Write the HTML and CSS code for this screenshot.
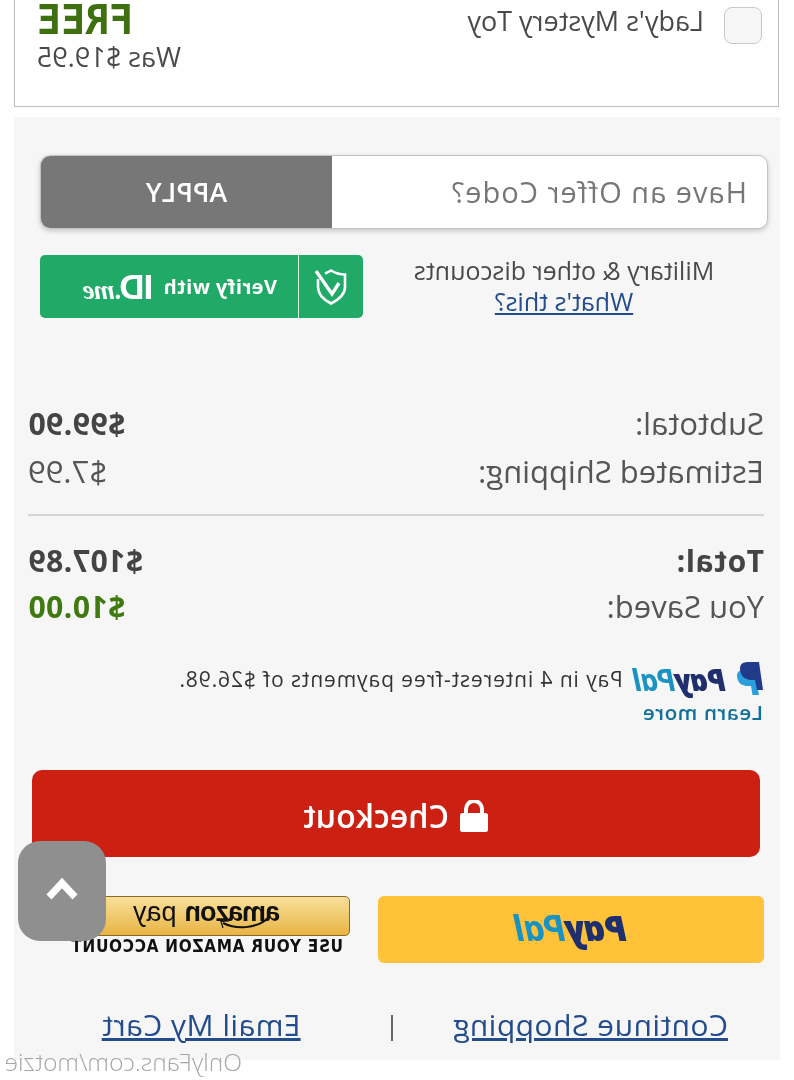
FILE: index.html
```html
<!DOCTYPE html>
<html lang="en">
<head>
    <meta charset="UTF-8">
    <meta name="viewport" content="width=device-width, initial-scale=1.0">
    <title>Cart</title>
    <link rel="stylesheet" href="styles.css">
</head>
<body>
    <div class="page">
        <div class="gift-card">
            <div class="gift-check"></div>
            <div class="gift-name">Lady's Mystery Toy</div>
            <div class="gift-price">
                <div class="gift-free">FREE</div>
                <div class="gift-was">Was $19.95</div>
            </div>
        </div>

        <div class="summary">
            <div class="offer">
                <div class="offer-input">Have an Offer Code?</div>
                <div class="offer-apply">APPLY</div>
            </div>

            <div class="military">
                <div class="military-text">
                    <div>Military &amp; other discounts</div>
                    <a class="whats-this">What's this?</a>
                </div>
                <div class="idme">
                    <div class="idme-icon">
                        <svg width="34" height="38" viewBox="0 0 34 38">
                            <path d="M30 11 L30 19 C30 27 24 32 17 35.500 C10 32 3 27 3 19 L3 6.500 C8 6.500 13 5 17 2.500 C19 3.800 21 4.700 23 5.400" fill="none" stroke="#fff" stroke-width="2.600"/>
                            <path d="M9 15 L16 26 L32 3" fill="none" stroke="#fff" stroke-width="3.400"/>
                        </svg>
                    </div>
                    <div class="idme-label">
                        <span>Verify with</span>
                        <span class="idme-logo"><b>ID</b><i>.me</i></span>
                    </div>
                </div>
            </div>

            <div class="totals">
                <div class="row"><span>Subtotal:</span><b>$99.90</b></div>
                <div class="row"><span>Estimated Shipping:</span><span>$7.99</span></div>
                <div class="divider"></div>
                <div class="row"><b>Total:</b><b>$107.89</b></div>
                <div class="row row-saved"><span>You Saved:</span><b class="saved">$10.00</b></div>
            </div>

            <div class="paylater">
                <div class="paylater-line">
                    <svg width="26" height="34" viewBox="0 0 26 34">
                        <path d="M9 8 H20 C25 8 27 12 25.500 17 C24 22 20 24 15 24 H12 L10.500 33 H4 Z" fill="#2a9fdc"/>
                        <path d="M4 0 H15 C22 0 24 4 22.500 10 C21 16 16 18 11 18 H8 L6 28 H0 Z" fill="#1f3b8a"/>
                    </svg>
                    <span class="pp-logo small"><span class="pp-pay">Pay</span><span class="pp-pal">Pal</span></span>
                    <span class="paylater-text">Pay in 4 interest-free payments of $26.98.</span>
                </div>
                <a class="learn-more">Learn more</a>
            </div>

            <div class="checkout">
                <svg width="30" height="32" viewBox="0 0 30 32">
                    <path d="M7 14 V9 A8 8 0 0 1 23 9 V14" fill="none" stroke="#fff" stroke-width="4"/>
                    <rect x="1" y="13" width="28" height="19" rx="2.500" fill="#fff"/>
                </svg>
                <span>Checkout</span>
            </div>

            <div class="express">
                <div class="paypal-btn">
                    <span class="pp-logo"><span class="pp-pay">Pay</span><span class="pp-pal">Pal</span></span>
                </div>
                <div class="amazon">
                    <div class="amazon-btn">
                        <span class="amazon-word">amazon
                            <svg class="amazon-smile" width="48" height="12" viewBox="0 0 48 12">
                                <path d="M1 1 C12 9 30 11 44 4" fill="none" stroke="#111" stroke-width="2"/>
                                <path d="M38 2 L46 2.500 L44 9" fill="none" stroke="#111" stroke-width="1.200"/>
                            </svg>
                        </span>
                        <span class="amazon-pay">pay</span>
                    </div>
                    <div class="amazon-note">USE YOUR AMAZON ACCOUNT</div>
                </div>
            </div>

            <div class="cart-links">
                <a>Continue Shopping</a>
                <span class="cart-sep"></span>
                <a>Email My Cart</a>
            </div>
        </div>

        <div class="to-top">
            <svg width="34" height="24" viewBox="0 0 34 24">
                <path d="M4 20 L17 6 L30 20" fill="none" stroke="#fff" stroke-width="7"/>
            </svg>
        </div>
        <div class="watermark">OnlyFans.com/motzie</div>
    </div>
</body>
</html>
```

FILE: styles.css
```css
/* the whole screenshot is mirrored left to right, and a bit soft */
body {
    margin: 0;
    background: #fff;
    font-family: "Open Sans", "Liberation Sans", sans-serif;
    color: #4a4a4a;
}
a {
    color: #234c8e;
    text-decoration: underline;
}
.page {
    position: relative;
    width: 794px;
    height: 1080px;
    overflow: hidden;
    transform: scaleX(-1);
    filter: blur(0.4px);
}
.gift-card {
    display: flex;
    height: 108px;
    margin: -1px 14px 0 15px;
    padding: 0 22px 0 16px;
    background: #fff;
    border: 1px solid #bdbdbd;
    box-sizing: border-box;
}
.gift-check {
    width: 38px;
    height: 37px;
    margin-top: 7px;
    background: #f6f6f6;
    border: 1px solid #c9c9c9;
    border-radius: 8px;
    box-sizing: border-box;
}
.gift-name {
    margin: 2px 0 0 20px;
    font-size: 27px;
    line-height: 38px;
    flex: 1;
}
.gift-price {
    width: 144px;
}
.gift-free {
    margin-top: 2px;
    font: bold 40px/36px "DejaVu Sans Mono", monospace;
    color: #3f7010;
    text-align: right;
}
.gift-was {
    font-size: 27px;
    line-height: 32px;
    margin-top: 3px;
    white-space: nowrap;
}
.summary {
    margin: 10px 14px 0;
    height: 943px;
    background: #f6f6f6;
    padding: 38px 26px 0 12px;
    box-sizing: border-box;
}
.offer {
    display: flex;
    height: 74px;
    background: #fff;
    border-radius: 10px;
    border: 1px solid #c4c4c4;
    box-shadow: 0 2px 5px rgba(0,0,0,0.2);
    overflow: hidden;
    box-sizing: border-box;
}
.offer-input {
    flex: 1;
    padding-left: 20px;
    line-height: 72px;
    font-size: 29px;
    letter-spacing: 1px;
    color: #777;
}
.offer-apply {
    width: 291px;
    background: #777;
    color: #fff;
    text-align: center;
    font-size: 27px;
    font-weight: 600;
    line-height: 72px;
}
.military {
    display: flex;
    justify-content: space-between;
    margin-top: 26px;
}
.military-text {
    width: 302px;
    margin-left: 53px;
    text-align: center;
    font-size: 25px;
    line-height: 31px;
    white-space: nowrap;
}
.idme {
    display: flex;
    width: 323px;
    height: 63px;
    background: #20a967;
    border-radius: 5px;
    color: #fff;
}
.idme-icon {
    display: flex;
    align-items: center;
    justify-content: center;
    width: 64px;
    border-right: 1px solid #d6f0e2;
}
.idme-label {
    display: flex;
    align-items: center;
    gap: 10px;
    padding-left: 21px;
    font-size: 20px;
    font-weight: 700;
    letter-spacing: 0.4px;
}
.idme-logo b {
    font: bold 35px "Liberation Sans", sans-serif;
    letter-spacing: -1px;
}
.idme-logo i {
    font: italic bold 27px "Liberation Serif", serif;
    letter-spacing: -1px;
}
.totals {
    margin: 81px 0 0 4px;
    width: 736px;
    font-size: 31px;
    color: #555;
}
.row {
    display: flex;
    justify-content: space-between;
    align-items: center;
    height: 48px;
}
.row b {
    font-size: 30px;
    font-weight: 700;
    letter-spacing: 0.5px;
    color: #444;
}
.row-saved {
    margin-top: -2px;
}
.row .saved {
    color: #3f7a10;
}
.divider {
    height: 2px;
    margin: 19px 0 20px;
    background: #d6d6d6;
}
.paylater {
    margin: 31px 0 0 5px;
}
.paylater-line {
    display: flex;
    align-items: center;
    gap: 11px;
    height: 36px;
}
.paylater-text {
    font-size: 21px;
    letter-spacing: 0.9px;
    color: #333;
}
.pp-logo {
    font: italic 800 36px "Open Sans", sans-serif;
    letter-spacing: -1px;
}
.pp-logo.small {
    font-size: 30px;
}
.pp-pay {
    color: #1f2f6e;
}
.pp-pal {
    color: #1b93c2;
    font-weight: 700;
}
.learn-more {
    display: block;
    margin-top: 1px;
    font-size: 20.500px;
    font-weight: 600;
    letter-spacing: 0.6px;
    color: #0f7099;
    text-decoration: none;
}
.checkout {
    display: flex;
    align-items: center;
    justify-content: center;
    gap: 10px;
    margin: 44px -8px 0 8px;
    height: 87px;
    padding-top: 4px;
    background: #cb2012;
    border-radius: 10px;
    box-sizing: border-box;
    color: #fff;
    font-size: 32px;
    font-weight: 600;
}
.express {
    display: flex;
    justify-content: space-between;
    margin: 39px 0 0 4px;
    width: 736px;
}
.paypal-btn {
    display: flex;
    align-items: center;
    justify-content: center;
    width: 386px;
    height: 67px;
    padding-bottom: 4px;
    background: #ffc238;
    border-radius: 6px;
    box-sizing: border-box;
}
.amazon {
    width: 278px;
    margin-right: 44px;
}
.amazon-btn {
    display: flex;
    align-items: center;
    gap: 9px;
    height: 40px;
    padding: 0 0 8px 69px;
    background: linear-gradient(#f8e09a, #e8b445);
    border: 1px solid #8a6a22;
    border-radius: 5px;
    box-sizing: border-box;
    color: #111;
}
.amazon-word {
    position: relative;
    font: bold 27px "Liberation Sans", sans-serif;
    letter-spacing: -1px;
    line-height: 26px;
}
.amazon-smile {
    position: absolute;
    left: 13px;
    top: 20px;
}
.amazon-pay {
    font: 27px "Liberation Sans", sans-serif;
}
.amazon-note {
    padding-left: 7px;
    font: bold 17px/20px "DejaVu Sans Condensed", "DejaVu Sans", sans-serif;
    letter-spacing: 0.7px;
    color: #111;
    white-space: nowrap;
}
.cart-links {
    display: flex;
    align-items: center;
    margin: 41px 0 0 40px;
    font-size: 30px;
}
.cart-links a {
    letter-spacing: 0.5px;
}
.cart-sep {
    width: 2px;
    height: 26px;
    margin: 6px 90px 0 60px;
    background: #666;
}
.to-top {
    position: absolute;
    left: 688px;
    top: 841px;
    display: flex;
    align-items: center;
    justify-content: center;
    width: 88px;
    height: 100px;
    padding-bottom: 4px;
    background: #8f8f8f;
    border-radius: 22px;
    box-sizing: border-box;
}
.watermark {
    position: absolute;
    left: 552px;
    top: 1048px;
    font-size: 24.500px;
    font-weight: 300;
    line-height: 28px;
    color: #a6a6a6;
    white-space: nowrap;
}
```
